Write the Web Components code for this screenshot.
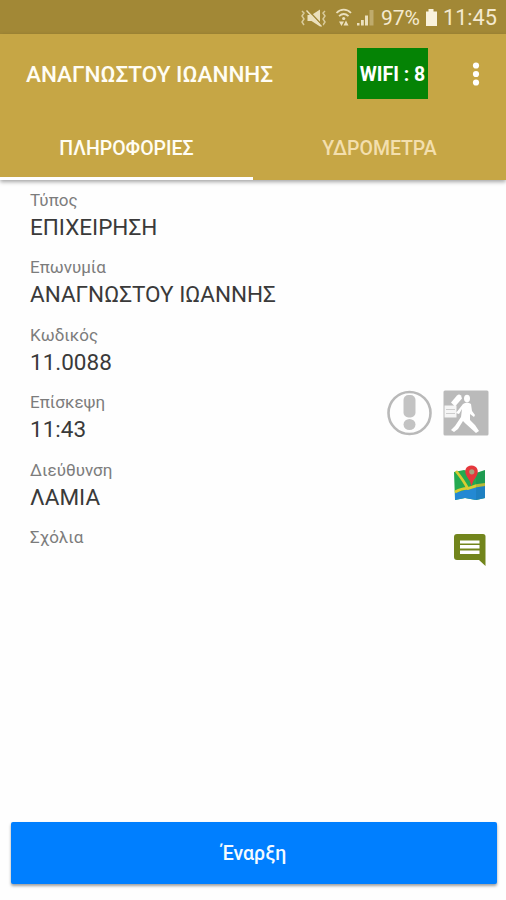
<!DOCTYPE html>
<html lang="el">
<head>
<meta charset="utf-8">
<title>Πληροφορίες πελάτη</title>
<style>
html,body{margin:0;height:100%;background:#fefefe;font-family:Roboto,"Noto Sans",sans-serif}
</style>
</head>
<body>
<client-screen></client-screen>
<script>
const define=(name,html)=>{
  const t=document.createElement('template');t.innerHTML=html;
  customElements.define(name,class extends HTMLElement{
    constructor(){super();this.attachShadow({mode:'open'}).append(t.content.cloneNode(true));}
  });
};

define('status-bar',`<style>
:host{display:flex;height:34px;box-sizing:border-box;padding:1px 9px 0 0;align-items:center;justify-content:flex-end;background:#a28836;color:#f4ead0;font-size:21.700px;line-height:34px}
svg{display:block;flex:none}
.p{margin-left:5px;font-size:21px}.t{margin-left:5px}
</style>
<svg width="76" height="34" viewBox="302 0 76 34" fill="#ebe0bd">
 <path d="M309.500 14h4l8.500-5.500v17l-8.500-5.500h-4z"/>
 <path d="M304 10l2 2-2 3 2 3-2 3 2 3M327 10l-2 2 2 3-2 3 2 3-2 3" fill="none" stroke="#d9cb9c" stroke-width="1.500"/>
 <path d="M309.500 8.500l15 16" stroke="#a28836" stroke-width="1.600"/><path d="M308.500 9.500l15 16" stroke="#ebe0bd" stroke-width="1.400"/>
 <g fill="none" stroke="#ebe0bd" stroke-width="1.700"><path d="M338.500 12c4-4.500 10.500-4.500 14.500 0M341 15.200c3-2.800 6.500-2.800 9.500 0"/></g>
 <circle cx="345.700" cy="17.500" r="1.600"/>
 <path d="M341 20.500h5l-2.500 4.500zM345.500 24.500h5l-2.500-5z"/>
 <path d="M359 22h2.500v2.500H359zM363 19h2.800v5.500H363zM367 14.500h3v10h-3z"/><path d="M371.500 9h4v15.500h-4z" opacity=".4"/>
</svg>
<span class="p">97%</span>
<svg width="13" height="34" viewBox="0 0 13 34" style="margin-left:5px"><path d="M3.500 8h5v2.500H12V25H1V10.500h2.500z" fill="#f9f2dc"/></svg>
<span class="t">11:45</span>`);

define('wifi-badge',`<style>
:host{display:flex;width:71px;height:51px;box-sizing:border-box;padding-top:1px;align-items:center;justify-content:center;background:#058305;color:#fff;font-size:19.5px;font-weight:700;white-space:nowrap}
</style><span><slot></slot></span>`);

define('app-bar',`<style>
:host{display:flex;height:79px;align-items:center;padding:0 15px 0 26px;color:#fffdf4;box-sizing:border-box}
h1{margin:0;font-size:22.5px;font-weight:500;flex:1;white-space:nowrap}
svg{display:block;margin-left:33px}
</style><h1><slot></slot></h1><slot name="badge"></slot>
<svg width="30" height="36" fill="#fff"><circle cx="15" cy="9.500" r="3.100"/><circle cx="15" cy="18" r="3.100"/><circle cx="15" cy="26.500" r="3.100"/></svg>`);

define('tab-item',`<style>
:host{display:flex;flex:1;height:67px;box-sizing:border-box;padding-top:7px;align-items:center;justify-content:center;color:#f3dfae;font-size:19.5px;font-weight:500;border-bottom:3px solid transparent}
:host([selected]){color:#fffdf4;border-color:#fff}
</style><span><slot></slot></span>`);

define('tab-bar',`<style>:host{display:flex;height:67px}</style><slot></slot>`);

define('info-row',`<style>
:host{display:flex;height:67.5px;padding:0 17px 0 30px;justify-content:space-between}
.l{font-size:17px;line-height:20px;color:#7c7c7c;display:block}
.v{font-size:22.5px;line-height:26px;margin-top:4px;color:#3a3a3a;display:block}
div{white-space:nowrap}
.i{display:flex;gap:10px}
</style><div><span class="l"><slot name="label"></slot></span><span class="v"><slot></slot></span></div><div class="i"><slot name="icons"></slot></div>`);

define('alert-icon',`<style>:host{display:block;width:46px;height:46px;margin-top:-2.2px}</style>
<svg width="46" height="46" viewBox="0 0 46 46"><circle cx="22.500" cy="23" r="21" fill="none" stroke="#b9b9b9" stroke-width="2.600"/><rect x="16.500" y="5" width="12" height="22.500" rx="5" fill="#c3c3c3"/><ellipse cx="22.500" cy="34.500" rx="6" ry="5.500" fill="#c3c3c3"/></svg>`);
define('visit-icon',`<style>:host{display:block;width:46px;height:46px;margin-top:-2.2px}</style>
<svg width="46" height="46" viewBox="0 0 46 46"><rect x=".5" y=".5" width="45" height="45" rx="1.500" fill="#bababa"/>
<g fill="#fff"><path d="M8 12.500l6-7q2-2 4 0l1 3-7 8z"/><path d="M1.500 15.500h12v12h-12z" opacity=".85"/><ellipse cx="24" cy="8.500" rx="3" ry="3.800"/>
<path d="M20 14q4-3 8 0l1 7 3 4-1 2-4-3v6l5 5 4 6-3 2-10-9-3-3-5 8-4 3-3-2 4-4 6-9 1-8-3 5-3-1z"/></g><path d="M3 19.500h9M3 23.500h9" stroke="#cdcdcd"/></svg>`);
define('map-icon',`<style>:host{display:block;width:36px;height:40px;margin:3.500px 1px 0 0}</style>
<svg width="36" height="40" viewBox="0 0 36 40"><path d="M2 9l10-2 12 3 9-3v28l-9 2-11-2-10 2z" fill="#24a94f"/><path d="M3 30l10-3 20-5v13l-9 2-11-2-10 2z" fill="#2389d3"/>
<path d="M4 8q8 10 12 18M3 29q8-4 13-3.500 8-3.500 17-4" fill="none" stroke="#d9cc32" stroke-width="2.800"/><path d="M24 10l9-3v28l-9 2z" fill="#075060" opacity=".15"/>
<path d="M19.500 23q-1-5-4-8.500C11 8 14 2.500 19.500 2.500S28 8 24 14q-3.500 4-4.500 9z" fill="#e5373c"/><circle cx="19.800" cy="8.800" r="2.600" fill="#a9a17d"/></svg>`);
define('comment-icon',`<style>:host{display:block;width:34px;height:34px;margin:6px 2px 0 0}</style>
<svg width="34" height="34" viewBox="0 0 34 34"><path d="M4 1h26q2.500 0 2.500 2.500V33L26 27H4q-3 0-3-3V4q0-3 3-3z" fill="#72851c"/><path d="M7 7.500h19.500v3H7zM7 12h19.500v3.500H7zM7 17.500h19.500v3.500H7z" fill="#fff"/></svg>`);

define('start-button',`<style>
:host{display:flex;height:62px;align-items:center;justify-content:center;background:#007fff;color:#f4faff;border-radius:2px;font-size:19.5px;font-weight:500;box-shadow:0 2px 3px rgba(0,0,0,.38)}
</style><span><slot></slot></span>`);

define('client-screen',`<style>
:host{display:flex;flex-direction:column;width:506px;height:900px}
header{background:#c6a645;box-shadow:0 2px 4px rgba(0,0,0,.35)}
main{flex:1;padding-top:9.7px}
footer{padding:0 9px 16px 11px}
</style>
<status-bar></status-bar>
<header><app-bar>ΑΝΑΓΝΩΣΤΟΥ ΙΩΑΝΝΗΣ<wifi-badge slot="badge">WIFI : 8</wifi-badge></app-bar>
<tab-bar><tab-item selected>ΠΛΗΡΟΦΟΡΙΕΣ</tab-item><tab-item>ΥΔΡΟΜΕΤΡΑ</tab-item></tab-bar></header>
<main>
<info-row><span slot="label">Τύπος</span><span>ΕΠΙΧΕΙΡΗΣΗ</span></info-row>
<info-row><span slot="label">Επωνυμία</span><span>ΑΝΑΓΝΩΣΤΟΥ ΙΩΑΝΝΗΣ</span></info-row>
<info-row><span slot="label">Κωδικός</span><span>11.0088</span></info-row>
<info-row><span slot="label">Επίσκεψη</span><span>11:43</span><alert-icon slot="icons"></alert-icon><visit-icon slot="icons"></visit-icon></info-row>
<info-row><span slot="label">Διεύθυνση</span><span>ΛΑΜΙΑ</span><map-icon slot="icons"></map-icon></info-row>
<info-row><span slot="label">Σχόλια</span><comment-icon slot="icons"></comment-icon></info-row>
</main>
<footer><start-button>Έναρξη</start-button></footer>`);
</script>
</body>
</html>
